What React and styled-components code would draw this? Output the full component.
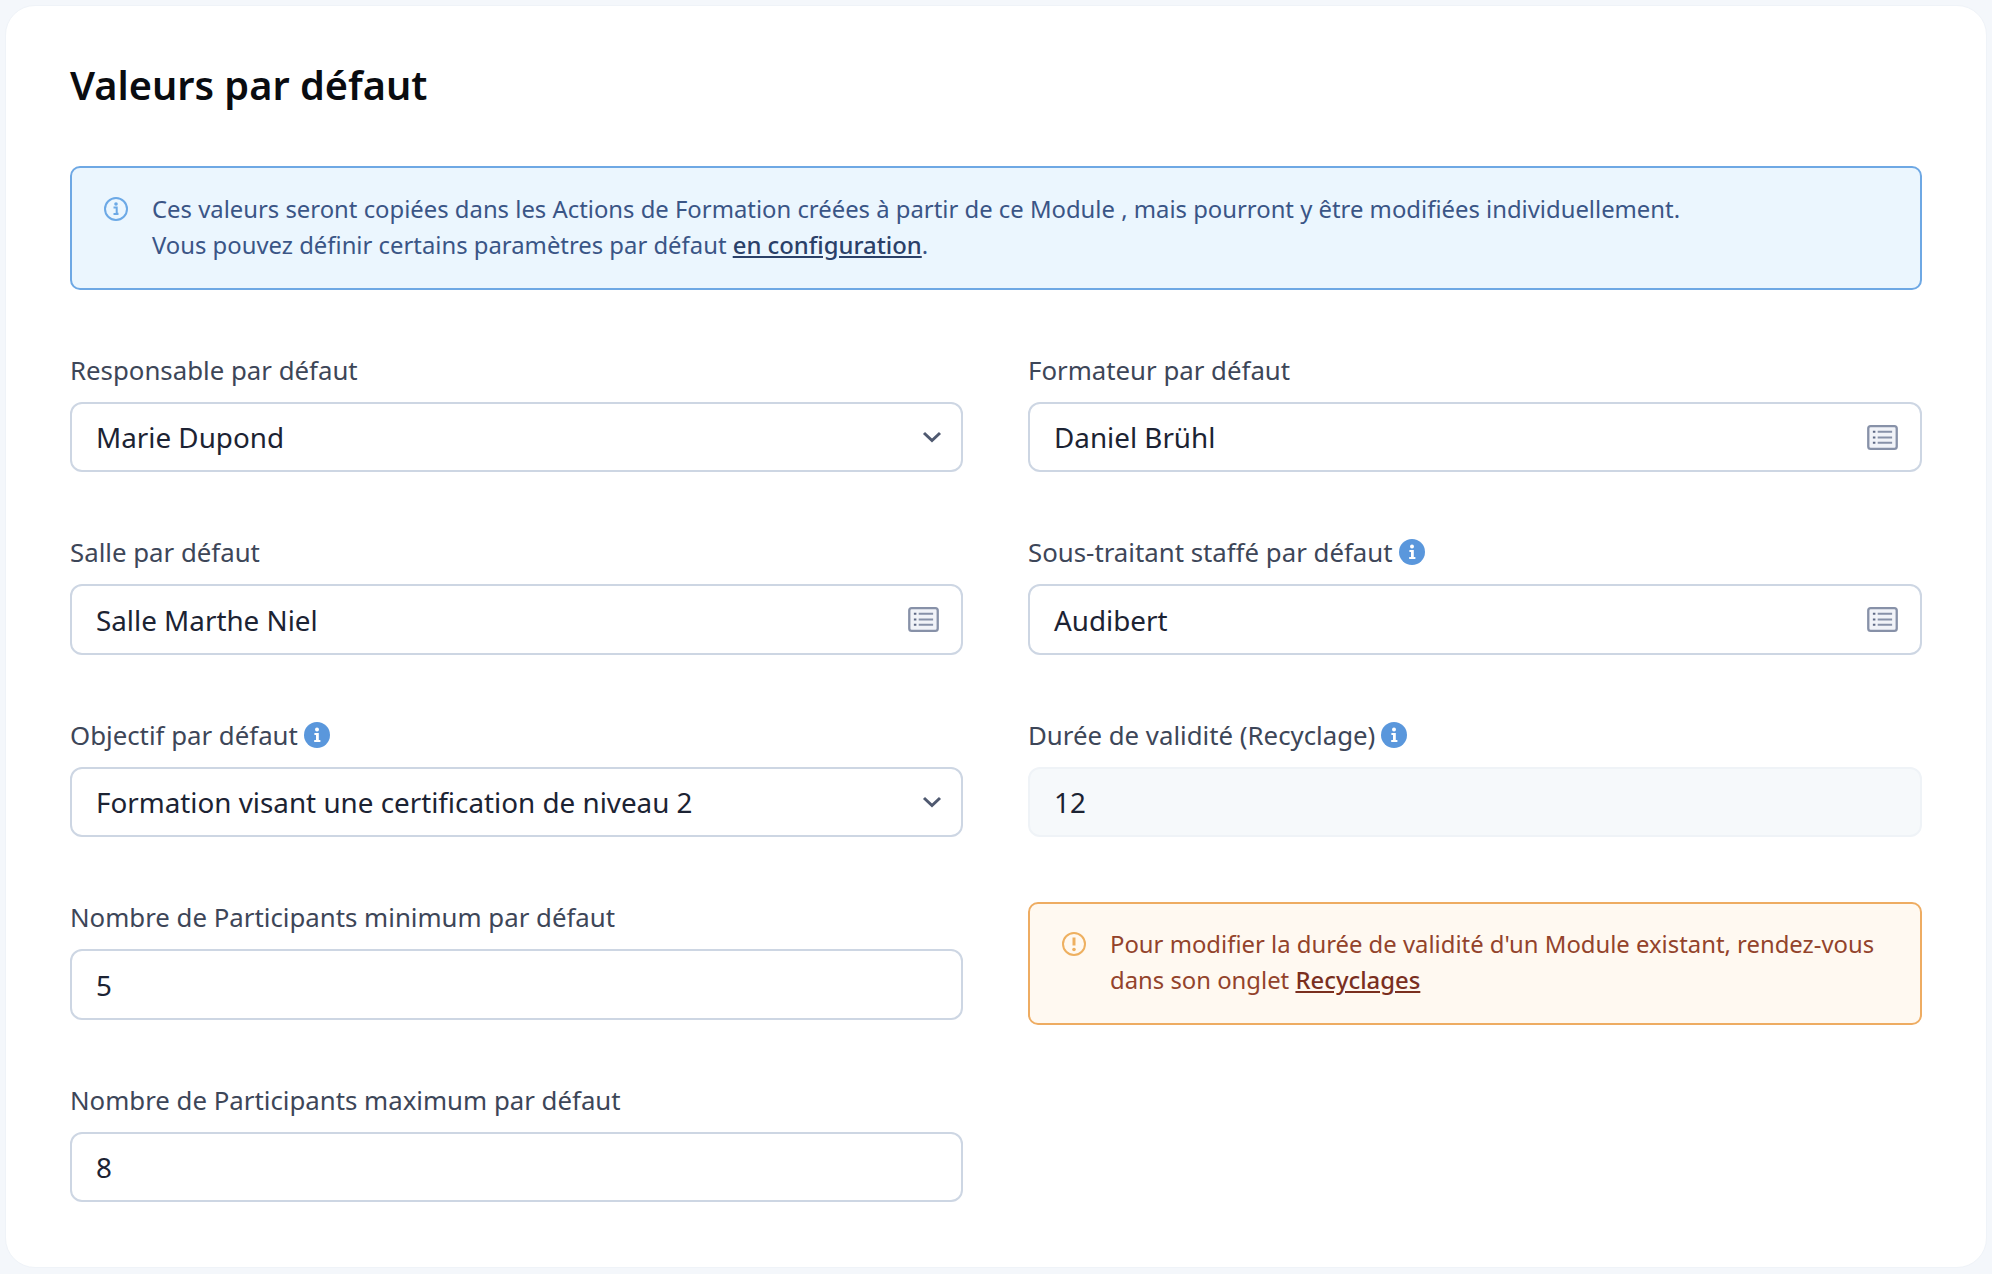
import styled, { createGlobalStyle } from "styled-components";

const GlobalStyle = createGlobalStyle`
	html, body {
		margin: 0;
		padding: 0;
		background: #f4f7fb;
	}
	* {
		box-sizing: border-box;
	}
`

const InfoOutline = ({ color }) => (
	<svg width="24" height="24" viewBox="1 1 24 24" fill="none">
		<circle cx="13" cy="13" r="11" stroke={color} strokeWidth="2" />
		<circle cx="13" cy="8" r="1.8" fill={color} />
		<path d="M10.5 11.5h3.2v6.2h1.8M10.5 18h5" stroke={color} strokeWidth="2" />
	</svg>
)

const WarnOutline = ({ color }) => (
	<svg width="24" height="24" viewBox="1 1 24 24" fill="none">
		<circle cx="13" cy="13" r="11" stroke={color} strokeWidth="2" />
		<path d="M13 6.5v8" stroke={color} strokeWidth="3" />
		<circle cx="13" cy="18.5" r="1.8" fill={color} />
	</svg>
)

const InfoBadge = () => (
	<svg width="26" height="26" viewBox="0 0 26 26">
		<circle cx="13" cy="13" r="13" fill="#5a97dc" />
		<circle cx="13" cy="7.6" r="2" fill="#fff" />
		<path d="M10.4 11h4.4v7h1.6v2h-6.2v-2h1.8v-5h-1.6z" fill="#fff" />
	</svg>
)

const Chevron = () => (
	<svg width="20" height="12" viewBox="0 0 20 12" fill="none">
		<path d="M2 2l8 7.5L18 2" stroke="#4f5970" strokeWidth="3" />
	</svg>
)

const ListCard = () => (
	<ListSvg width="31" height="25" viewBox="0 0 32 26" fill="none">
		<rect x="1.2" y="1.2" width="29.6" height="23.6" rx="2.5" fill="#f1f3f8" stroke="#8791a8" strokeWidth="2.4" />
		<path d="M11 7h15M11 13h15M11 18.5h15" stroke="#8791a8" strokeWidth="2.2" />
		<path d="M6 7h2.6M6 13h2.6M6 18.5h2.6" stroke="#5f6a85" strokeWidth="2.2" />
	</ListSvg>
)

const Field = ({ label, value, icon, hint, disabled }) => (
	<FieldBox>
		<Label>
			{label}
			{hint && <InfoBadge />}
		</Label>
		<Input $disabled={disabled}>
			<span>{value}</span>
			{icon === "select" && <Chevron />}
			{icon === "list" && <ListCard />}
		</Input>
	</FieldBox>
)

const App = () => {
	return (
		<Page>
			<GlobalStyle />
			<Card>
				<Title>Valeurs par défaut</Title>
				<InfoAlert>
					<AlertIcon><InfoOutline color="#6ca9e6" /></AlertIcon>
					<div>
						Ces valeurs seront copiées dans les Actions de Formation créées à partir de ce Module , mais pourront y être modifiées individuellement.
						<br />
						Vous pouvez définir certains paramètres par défaut <a href="#config">en configuration</a>.
					</div>
				</InfoAlert>
				<Grid>
					<Column>
						<Field label="Responsable par défaut" value="Marie Dupond" icon="select" />
						<Field label="Salle par défaut" value="Salle Marthe Niel" icon="list" />
						<Field label="Objectif par défaut" value="Formation visant une certification de niveau 2" icon="select" hint />
						<Field label="Nombre de Participants minimum par défaut" value="5" />
						<Field label="Nombre de Participants maximum par défaut" value="8" />
					</Column>
					<Column>
						<Field label="Formateur par défaut" value="Daniel Brühl" icon="list" />
						<Field label="Sous-traitant staffé par défaut" value="Audibert" icon="list" hint />
						<Field label="Durée de validité (Recyclage)" value="12" hint disabled />
						<WarnAlert>
							<AlertIcon><WarnOutline color="#eeb060" /></AlertIcon>
							<div>
								Pour modifier la durée de validité d'un Module existant, rendez-vous
								<br />
								dans son onglet <a href="#recyclages">Recyclages</a>
							</div>
						</WarnAlert>
					</Column>
				</Grid>
			</Card>
		</Page>
	)
}

const Page = styled.div`
	width: 1992px;
	height: 1274px;
	padding: 5px 5px 6px 5px;
	font-family: "Noto Sans", "Open Sans", sans-serif;
`

const Card = styled.div`
	height: 100%;
	background: #ffffff;
	border: 1px solid #eff3f8;
	border-radius: 30px;
	padding: 54px 64px 0 64px;
`

const Title = styled.h1`
	margin: 0 0 56px;
	font-size: 39.7px;
	line-height: 50px;
	font-weight: 600;
	color: #0a0c10;
`

const Alert = styled.div`
	display: flex;
	gap: 24px;
	padding: 23px 32px;
	border-radius: 10px;
	font-size: 23.85px;
	line-height: 36px;

	a {
		color: inherit;
		font-weight: 500;
		text-decoration: underline;
	}
`

const InfoAlert = styled(Alert)`
	height: 124px;
	background: #ebf6fe;
	border: 2px solid #6ea8e4;
	color: #3a5586;
	margin-bottom: 62.9px;

	a {
		color: #2a4068;
	}
`

const WarnAlert = styled(Alert)`
	height: 123px;
	margin-top: 2px;
	padding-top: 22px;
	background: #fff9f1;
	border: 2px solid #eeac62;
	color: #93432b;

	a {
		color: #7a2f1f;
	}
`

const AlertIcon = styled.div`
	flex: none;
	height: 36px;
	display: flex;
	align-items: center;
`

const Grid = styled.div`
	display: grid;
	grid-template-columns: 893px 894px;
	column-gap: 65px;
`

const Column = styled.div`
	display: flex;
	flex-direction: column;
	gap: 63.1px;
`

const FieldBox = styled.div`
	display: flex;
	flex-direction: column;
	gap: 15px;
`

const Label = styled.div`
	display: flex;
	align-items: center;
	gap: 6px;
	height: 34px;
	font-size: 25.8px;
	color: #3d4658;
`

const Input = styled.div`
	display: flex;
	align-items: center;
	justify-content: space-between;
	height: 70.4px;
	padding: 0 19px 0 24px;
	border-radius: 12px;
	border: 2px solid ${(props) => (props.$disabled ? "#eff3f7" : "#cdd6e3")};
	background: ${(props) => (props.$disabled ? "#f6f9fb" : "#ffffff")};
	font-size: 27.8px;
	color: #1c2333;
`

const ListSvg = styled.svg`
	margin-right: 3px;
`

export default App;
